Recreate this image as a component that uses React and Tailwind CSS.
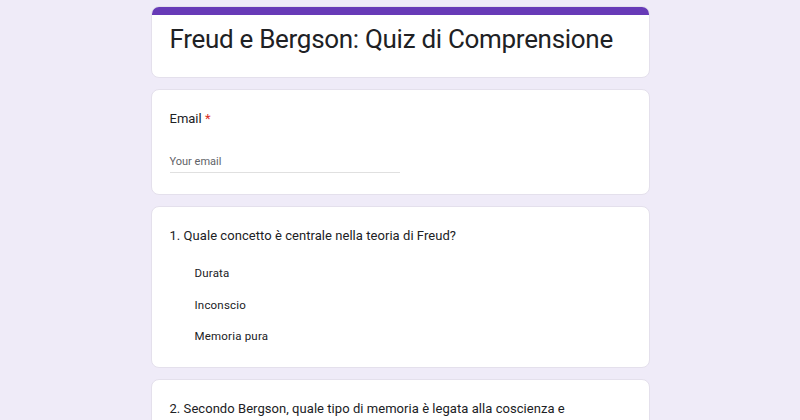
import React from "react";

const questions = [
  {
    text: "1. Quale concetto è centrale nella teoria di Freud?",
    options: ["Durata", "Inconscio", "Memoria pura"],
  },
  {
    text: "2. Secondo Bergson, quale tipo di memoria è legata alla coscienza e",
    options: ["Memoria abitudine", "Memoria pura", "Memoria inconscia"],
  },
];

const App = () => {
  return (
    <div className="min-h-screen bg-[#efebf8] pt-[6px] font-['Roboto',sans-serif] text-[#202124]">
      <div className="w-[499px] mx-auto flex flex-col gap-[11px]">
        {/* Title card */}
        <div className="bg-white rounded-lg overflow-hidden border border-[#e4e0ec]">
          <div className="h-[8px] bg-[#673ab7]" />
          <div className="px-[18px] pt-[8px] pb-[22px]">
            <h1 className="text-[26px] leading-[32px] tracking-[-0.3px] text-[#202124]">
              Freud e Bergson: Quiz di Comprensione
            </h1>
          </div>
        </div>

        {/* Email */}
        <div className="bg-white rounded-lg border border-[#e4e0ec] px-[18px] pt-[19px] pb-[21px]">
          <p className="text-[13px] leading-[20px]">
            Email <span className="text-[#d93025]">*</span>
          </p>
          <div className="mt-[25px] w-[230px] border-b border-[#e0e0e0] pb-[2px]">
            <span className="text-[11px] leading-[16px] text-[#5f6368] block">Your email</span>
          </div>
        </div>

        {/* Questions */}
        {questions.map((q, idx) => (
          <div
            key={idx}
            className="bg-white rounded-lg border border-[#e4e0ec] px-[18px] pt-[19px] pb-[23px]"
          >
            <p className="text-[13px] leading-[20px] tracking-[0.05px]">{q.text}</p>
            <div className="mt-[19px] pl-[25px] flex flex-col gap-[15.5px]">
              {q.options.map((opt, i) => (
                <span key={i} className="text-[11.5px] leading-[16px] tracking-[0.2px]">
                  {opt}
                </span>
              ))}
            </div>
          </div>
        ))}
      </div>
    </div>
  );
};

export default App;
